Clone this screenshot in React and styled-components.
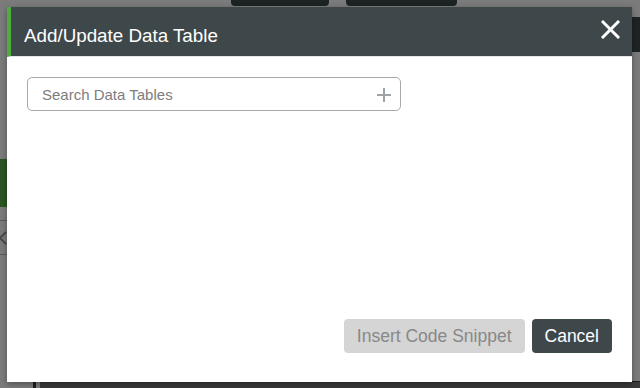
import styled, { createGlobalStyle } from "styled-components";

const HEADER = "#3e484b";
const ACCENT = "#4cae3c";
const FONT = `"Liberation Sans", Arial, sans-serif`;

const GlobalStyle = createGlobalStyle`
    html, body {
        margin: 0;
        padding: 0;
        background: #7b7b7b;
        font-family: ${FONT};
    }
`;

export default function App() {
    return (
        <>
            <GlobalStyle />
            <Screen>
                {/* dimmed page behind the dialog */}
                <Backdrop>
                    <TopRow>
                        <TopButton $width={98} />
                        <TopButton $width={111} />
                    </TopRow>
                    <Middle>
                        <LeftRail>
                            <SideBand />
                            <SideRule />
                            <ChevronSlot>
                                <svg width="8" height="14" viewBox="0 0 8 14">
                                    <path d="M7 1 L1 7 L7 13" fill="none" stroke="#4a4a4a" strokeWidth="2" />
                                </svg>
                            </ChevronSlot>
                            <SideRule />
                        </LeftRail>
                        <RightRail>
                            <RightBand />
                        </RightRail>
                    </Middle>
                    <BottomRow>
                        <BottomPost />
                        <BottomBar />
                    </BottomRow>
                </Backdrop>

                <Modal>
                    <Header>
                        <Title>Add/Update Data Table</Title>
                        <CloseButton aria-label="Close">
                            <svg width="19" height="19" viewBox="0 0 19 19">
                                <path d="M2 2 L17 17 M17 2 L2 17" stroke="#fff" strokeWidth="3" strokeLinecap="square" />
                            </svg>
                        </CloseButton>
                    </Header>
                    <Body>
                        <SearchBox>
                            <SearchInput placeholder="Search Data Tables" />
                            <AddIcon width="16" height="16" viewBox="0 0 16 16">
                                <path d="M8 1 V15 M1 8 H15" stroke="#9ea3a8" strokeWidth="2" />
                            </AddIcon>
                        </SearchBox>
                    </Body>
                    <Footer>
                        <Button disabled>Insert Code Snippet</Button>
                        <Button $primary>Cancel</Button>
                    </Footer>
                </Modal>
            </Screen>
        </>
    );
}

const Screen = styled.div`
    position: relative;
    width: 640px;
    height: 388px;
    overflow: hidden;
    background: #7b7b7b;
`;

const Backdrop = styled.div`
    height: 100%;
    display: flex;
    flex-direction: column;
`;

const TopRow = styled.div`
    height: 6px;
    display: flex;
    gap: 17px;
    padding-left: 231px;
`;

const TopButton = styled.div`
    width: ${(p) => p.$width}px;
    height: 6px;
    border-radius: 0 0 4px 4px;
    background: #1d2323;
`;

const Middle = styled.div`
    flex: 1;
    display: flex;
    justify-content: space-between;
`;

const LeftRail = styled.div`
    width: 10px;
    display: flex;
    flex-direction: column;
    padding-top: 153px;
`;

const SideBand = styled.div`
    height: 48px;
    margin-bottom: 13px;
    background: #295520;
`;

const SideRule = styled.div`
    height: 1px;
    background: #5a5a5a;
`;

const ChevronSlot = styled.div`
    height: 33px;
    display: flex;
    align-items: center;
    margin-left: -1px;
`;

const RightRail = styled.div`
    width: 12px;
    padding-top: 11px;
`;

const RightBand = styled.div`
    height: 35px;
    background: #1e2323;
`;

const BottomRow = styled.div`
    height: 10px;
    display: flex;
    align-items: flex-end;
    gap: 4px;
    padding-left: 33px;
`;

const BottomPost = styled.div`
    width: 3px;
    height: 10px;
    background: #1e1e1e;
`;

const BottomBar = styled.div`
    flex: 1;
    height: 6px;
    background: #3a3a3a;
    border-top: 1px solid #1e1e1e;
`;

const Modal = styled.div`
    position: absolute;
    left: 7px;
    top: 7px;
    width: 625px;
    height: 375px;
    display: flex;
    flex-direction: column;
    background: #fff;
    box-shadow: 0 2px 6px rgba(0, 0, 0, 0.35);
`;

const Header = styled.div`
    height: 50px;
    box-sizing: border-box;
    flex-shrink: 0;
    display: flex;
    align-items: center;
    justify-content: space-between;
    padding: 0 12px 0 13px;
    background: ${HEADER};
    border-left: 4px solid ${ACCENT};
    border-bottom: 1px solid #e3e6e8;
`;

const Title = styled.h1`
    margin: 0;
    padding-top: 9px;
    font-family: ${FONT};
    font-size: 18.8px;
    font-weight: normal;
    color: #fff;
`;

const CloseButton = styled.button`
    display: flex;
    padding: 0;
    margin-top: -5px;
    border: none;
    background: none;
    cursor: pointer;
`;

const Body = styled.div`
    flex: 1;
    padding: 20px 20px 0;
`;

const SearchBox = styled.div`
    width: 374px;
    height: 34px;
    box-sizing: border-box;
    display: flex;
    align-items: center;
    padding: 0 8px 0 14px;
    border: 1px solid #a9a9a9;
    border-radius: 5px;
`;

const SearchInput = styled.input`
    flex: 1;
    border: none;
    outline: none;
    padding: 0;
    font-family: ${FONT};
    font-size: 15px;
    color: #333;
    background: transparent;

    &::placeholder {
        color: #7d7d7d;
    }
`;

const AddIcon = styled.svg`
    flex-shrink: 0;
    margin-top: 2px;
`;

const Footer = styled.div`
    display: flex;
    justify-content: flex-end;
    gap: 7px;
    padding: 0 20px 29px;
`;

const Button = styled.button`
    height: 34px;
    padding: 0 13px;
    border: none;
    border-radius: 4px;
    font-family: ${FONT};
    font-size: 17.5px;
    cursor: pointer;
    background: ${(p) => (p.$primary ? HEADER : "#d5d5d5")};
    color: ${(p) => (p.$primary ? "#fff" : "#888")};

    &:disabled {
        cursor: default;
    }
`;
